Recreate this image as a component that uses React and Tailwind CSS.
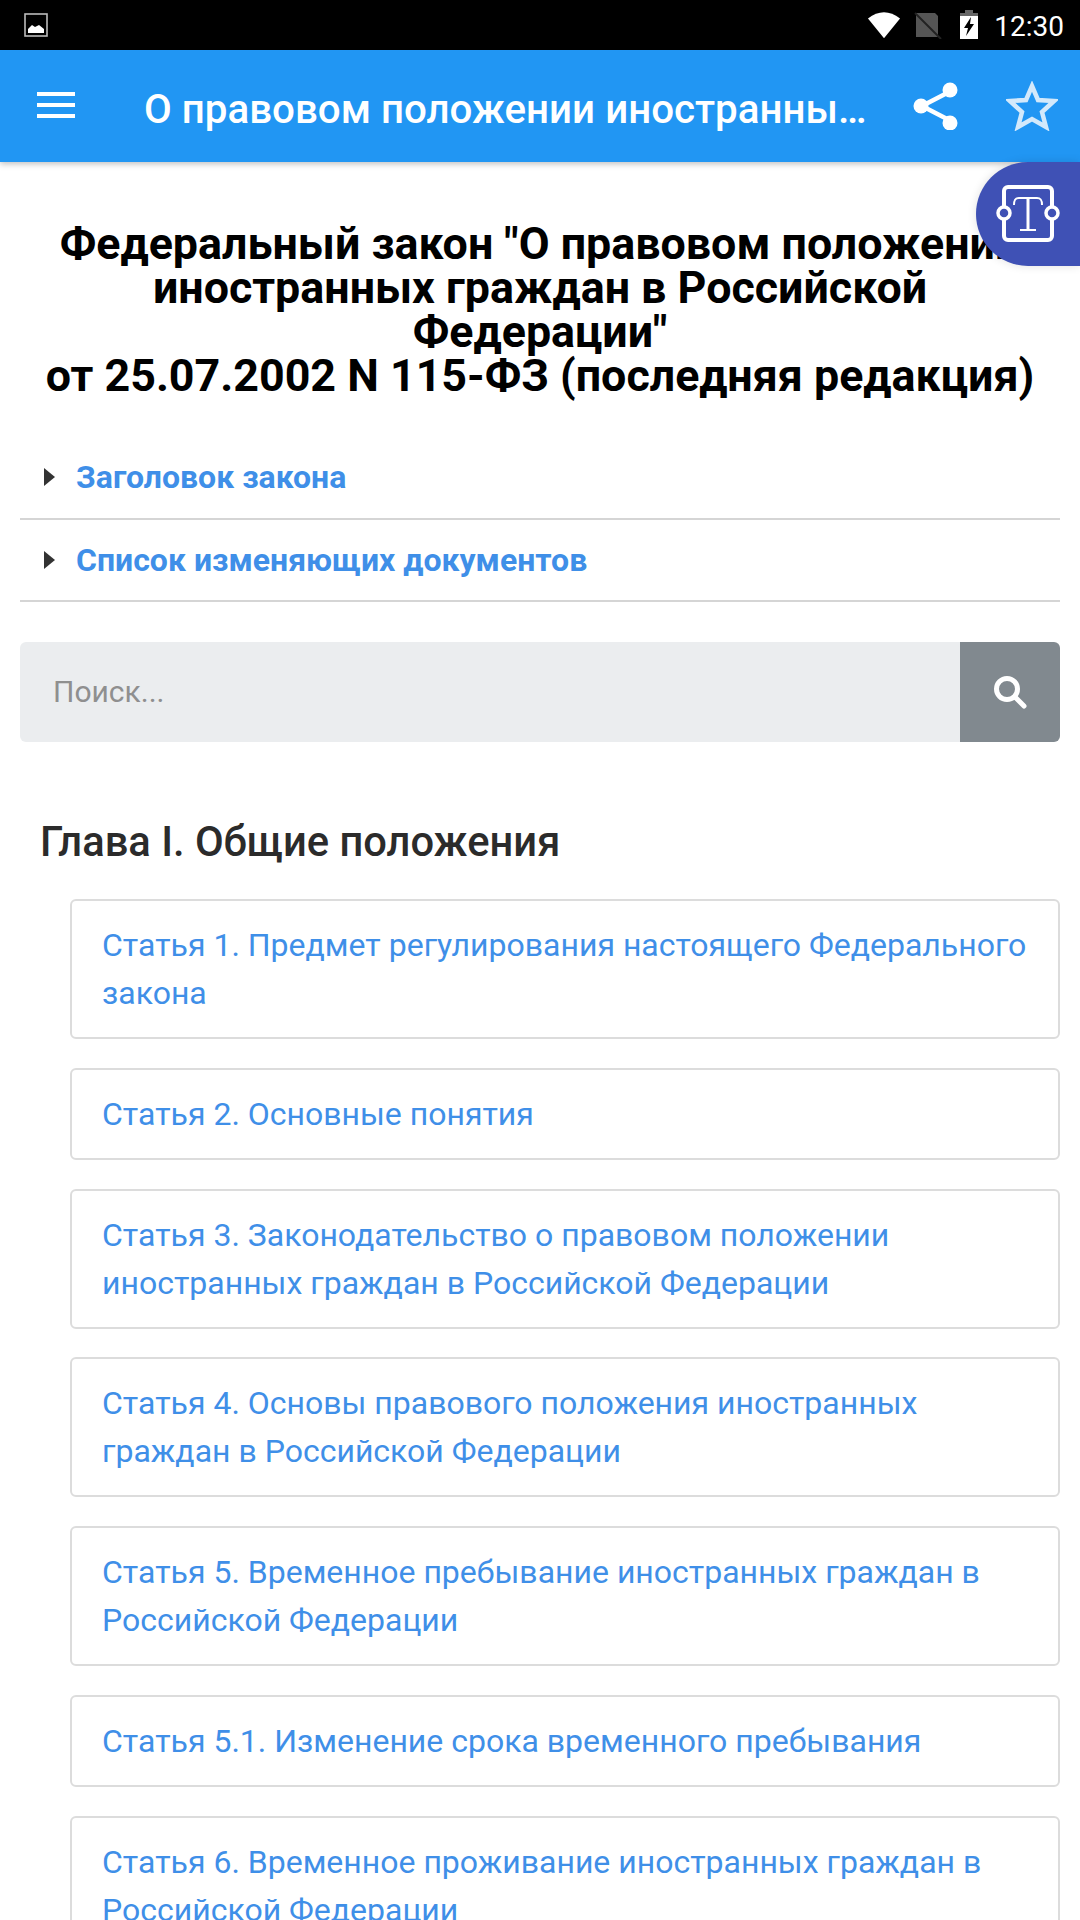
const arts = [
  ["Статья 1. Предмет регулирования настоящего Федерального", "закона"],
  ["Статья 2. Основные понятия"],
  ["Статья 3. Законодательство о правовом положении", "иностранных граждан в Российской Федерации"],
  ["Статья 4. Основы правового положения иностранных", "граждан в Российской Федерации"],
  ["Статья 5. Временное пребывание иностранных граждан в", "Российской Федерации"],
  ["Статья 5.1. Изменение срока временного пребывания"],
  ["Статья 6. Временное проживание иностранных граждан в", "Российской Федерации"],
];

function Caret() {
  return (
    <svg width="11" height="18" viewBox="0 0 11 18" className="shrink-0">
      <path d="M0 0 L11 9 L0 18 Z" fill="#333" />
    </svg>
  );
}

export default function App() {
  return (
    <div className="relative h-[1920px] w-[1080px] overflow-hidden bg-white font-['Roboto',sans-serif]">
      <div className="flex h-[50px] items-center justify-between bg-black pl-[24px] pr-[16px]">
        <svg width="24" height="24" viewBox="0 0 24 24">
          <rect x="1" y="1" width="22" height="22" fill="none" stroke="#bbb" strokeWidth="1.6" />
          <path d="M4 20 V16 L8 12 L11 14 L15 12 L20 16 V20 Z" fill="#fff" />
        </svg>
        <div className="flex items-center">
          <svg width="34" height="29" viewBox="0 0 36 29" className="mr-[13px]">
            <path d="M1 7 Q18 -6 35 7 L18 28 Z" fill="#fff" />
          </svg>
          <svg width="28" height="27" viewBox="0 0 28 27" className="mr-[17px]">
            <path d="M2 1 H21 L24 4 V25 H2 Z" fill="#555" />
            <path d="M1 1 L27 27" stroke="#222" strokeWidth="2" />
          </svg>
          <svg width="20" height="30" viewBox="0 0 20 30" className="mr-[15px]">
            <path d="M6 0 H14 V3 H19 V29 H1 V3 H6 Z" fill="#fff" />
            <path d="M1 3 H19 V6 H1 Z M6 0 H14 V3 H6 Z" fill="#666" />
            <path d="M12 7 L5 18 H9 L7 26 L15 14 H11 Z" fill="#000" />
          </svg>
          <span className="pt-[3px] text-[28px] leading-none text-white">12:30</span>
        </div>
      </div>

      <div className="relative z-10 flex h-[112px] items-center bg-[#2196f3] shadow-[0_2px_6px_rgba(0,0,0,0.25)]">
        <div className="ml-[37px] flex w-[38px] flex-col gap-[7px] self-start pt-[42px]">
          <div className="h-[4px] bg-white" />
          <div className="h-[4px] bg-white" />
          <div className="h-[4px] bg-white" />
        </div>
        <div className="ml-[69px] mt-[7px] w-[724px] truncate text-[40.3px] font-medium leading-[48px] text-white">
          О правовом положении иностранных граждан
        </div>
        <svg width="46" height="48" viewBox="0 0 46 48" className="ml-[45px] shrink-0">
          <path d="M36 10 L9 24 L36 38" fill="none" stroke="#fff" strokeWidth="4.5" />
          <circle cx="37" cy="8" r="7.5" fill="#fff" />
          <circle cx="8" cy="24" r="7.5" fill="#fff" />
          <circle cx="37" cy="41" r="7.5" fill="#fff" />
        </svg>
        <svg width="52" height="50" viewBox="0 0 52 50" className="ml-[47px] shrink-0">
          <path d="M26 5 L32 19 L48 20 L36 31 L40 46 L26 38 L12 46 L16 31 L4 20 L20 19 Z" fill="none" stroke="#d3e9fb" strokeWidth="4.5" />
        </svg>
      </div>

      <div className="absolute right-0 top-[162px] z-20 flex h-[104px] w-[104px] items-center justify-center rounded-l-[52px] bg-[#3f51b5] shadow-[0_0_10px_rgba(0,0,0,0.12)]">
        <svg width="64" height="60" viewBox="0 0 64 60">
          <rect x="8" y="3" width="48" height="53" rx="4" fill="none" stroke="#fff" strokeWidth="4" />
          <circle cx="8" cy="29" r="6" fill="#3f51b5" stroke="#fff" strokeWidth="3.5" />
          <circle cx="56" cy="29" r="6" fill="#3f51b5" stroke="#fff" strokeWidth="3.5" />
          <path d="M18 21 C18 16 19 14 23 14 H41 C45 14 46 16 46 21" fill="none" stroke="#fff" strokeWidth="2" />
          <path d="M32 14 V46" fill="none" stroke="#fff" strokeWidth="3" />
          <path d="M24 46 H40" fill="none" stroke="#fff" strokeWidth="2" />
        </svg>
      </div>

      <h1 className="mt-[60px] text-center text-[44.8px] font-bold leading-[44px] text-black whitespace-nowrap">
        <span className="block">Федеральный закон "О правовом положении</span>
        <span className="block">иностранных граждан в Российской</span>
        <span className="block">Федерации"</span>
        <span className="block">от 25.07.2002 N 115-ФЗ (последняя редакция)</span>
      </h1>

      <div className="mx-[20px] mt-[40px] flex h-[82px] items-center gap-[21px] border-b-2 border-[#d5d5d5] pl-[24px] pb-[2px]">
        <Caret />
        <span className="text-[32px] font-bold text-[#3f8fe8]">Заголовок закона</span>
      </div>
      <div className="mx-[20px] flex h-[82px] items-center gap-[21px] border-b-2 border-[#d5d5d5] pl-[24px]">
        <Caret />
        <span className="text-[32px] font-bold text-[#3f8fe8]">Список изменяющих документов</span>
      </div>

      <div className="mx-[20px] mt-[40px] flex h-[100px] overflow-hidden rounded-[6px]">
        <div className="flex flex-1 items-center bg-[#ebedef] pb-[2px] pl-[33px] text-[30px] text-[#8f8f8f]">Поиск...</div>
        <div className="flex w-[100px] items-center justify-center bg-[#81898f]">
          <svg width="34" height="34" viewBox="0 0 34 34">
            <circle cx="14" cy="14" r="10.5" fill="none" stroke="#fff" strokeWidth="5" />
            <path d="M22 22 L31 31" stroke="#fff" strokeWidth="5" strokeLinecap="round" />
          </svg>
        </div>
      </div>

      <h2 className="ml-[40px] mt-[76px] text-[41.7px] font-medium leading-[48px] text-[#2b2b2b]">Глава I. Общие положения</h2>

      <div className="ml-[70px] mr-[20px] mt-[33px] flex flex-col gap-[28.8px]">
        {arts.map((lines) => (
          <div key={lines[0]} className="rounded-[6px] border-2 border-[#dcdcdc] bg-white px-[30px] py-[20px] text-[32px] leading-[48px] text-[#3f8fe8]">
            {lines.map((l) => (
              <div key={l} className="whitespace-nowrap">{l}</div>
            ))}
          </div>
        ))}
      </div>
    </div>
  );
}
